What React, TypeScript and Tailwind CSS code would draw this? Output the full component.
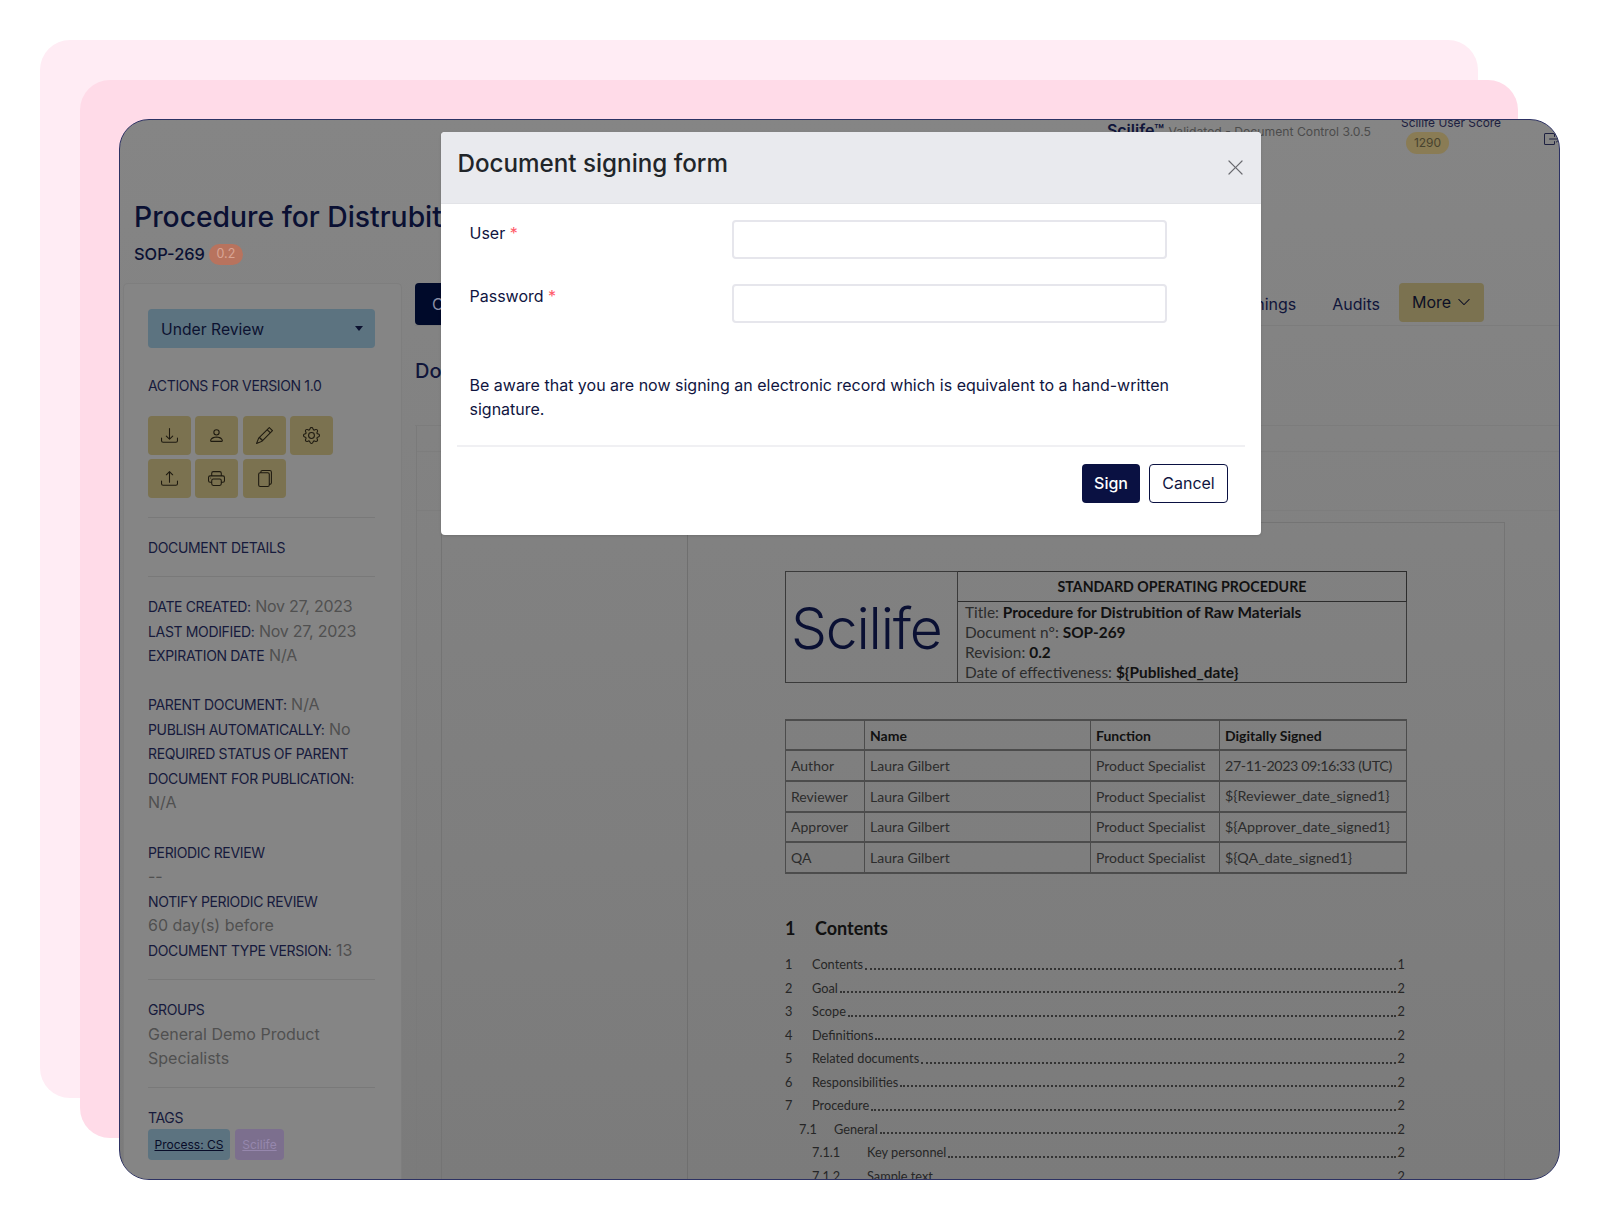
import React from "react";
import { BsDownload, BsPerson, BsPencil, BsGear, BsUpload, BsPrinter, BsFiles, BsChevronDown, BsXLg, BsBoxArrowRight } from "react-icons/bs";

const Label = ({ children }: { children: React.ReactNode }) => (
  <span className="text-[14px] tracking-[-0.35px] text-[#161a3c]">{children}</span>
);
const Val = ({ children }: { children: React.ReactNode }) => (
  <span className="text-[16px] text-[#505050]">{children}</span>
);
const DateVal = ({ children }: { children: React.ReactNode }) => (
  <span className="text-[16px] tracking-[-0.25px] text-[#505050]">{children}</span>
);
const Row = ({ children }: { children: React.ReactNode }) => <div className="h-[24.5px] whitespace-nowrap leading-[24.5px]">{children}</div>;
const Rule = ({ className }: { className: string }) => <div className={"border-t border-[#797979] " + className} />;

const icons = [BsDownload, BsPerson, BsPencil, BsGear, BsUpload, BsPrinter, BsFiles];

const toc: [string, string, string, string, string][] = [
  ["1", "Contents", "1", "w-[27px]", ""],
  ["2", "Goal", "2", "w-[27px]", ""],
  ["3", "Scope", "2", "w-[27px]", ""],
  ["4", "Definitions", "2", "w-[27px]", ""],
  ["5", "Related documents", "2", "w-[27px]", ""],
  ["6", "Responsibilities", "2", "w-[27px]", ""],
  ["7", "Procedure", "2", "w-[27px]", ""],
  ["7.1", "General", "2", "w-[35px]", "pl-[14px]"],
  ["7.1.1", "Key personnel", "2", "w-[55px]", "pl-[27px]"],
  ["7.1.2", "Sample text", "2", "w-[55px]", "pl-[27px]"],
];

const people = [
  ["Author", "27-11-2023 09:16:33 (UTC)", "tracking-[-0.4px]"],
  ["Reviewer", "${Reviewer_date_signed1}", ""],
  ["Approver", "${Approver_date_signed1}", ""],
  ["QA", "${QA_date_signed1}", ""],
];

const hb = "border-x border-y-2 border-[#4c4c4c] pl-[5px] whitespace-nowrap";

export default function App() {
  return (
    <div className="h-[1220px] w-[1600px] overflow-hidden bg-white pl-[40px] pt-[40px] font-[Inter,sans-serif]">
      <div className="h-[1058px] w-[1438px] rounded-[30px] bg-[#ffecf4] pl-[40px] pt-[40px]">
        <div className="h-[1058px] w-[1438px] rounded-[30px] bg-[#ffdbe8] pl-[39px] pt-[39px]">
          <div className="relative h-[1061px] w-[1441px] overflow-hidden rounded-[30px] border border-[#2d3263] bg-gradient-to-b from-[#858585] to-[#7b7b7b] text-[#161a3c]">
            {/* top bar */}
            <div className="flex h-[40px] items-start justify-end">
              <div className="whitespace-nowrap leading-[20px]">
                <span className="text-[16px] font-semibold text-[#10153a]">Scilife™</span>{" "}
                <span className="text-[12.2px] text-[#4c4c4c]">Validated - Document Control 3.0.5</span>
              </div>
              <div className="ml-[30px] mt-[-5px] w-[99px]">
                <div className="whitespace-nowrap text-[11.9px] leading-[16px] text-[#1d2040]">Scilife User Score</div>
                <div className="ml-[5px] mt-[1px] flex h-[22px] w-[43px] items-center justify-center rounded-full bg-[#8a7c55] text-[12px] text-[#48432f]">1290</div>
              </div>
              <BsBoxArrowRight className="ml-[44px] mr-[-1px] mt-[11px] shrink-0 text-[16px] text-[#1d2040]" />
            </div>

            {/* title */}
            <div className="ml-[14px] mt-[39px] whitespace-nowrap text-[28.3px] font-medium leading-[36px] text-[#0a1033]">
              Procedure for Distrubition of Raw Materials
            </div>
            <div className="ml-[14px] mt-[7px] flex h-[24px] items-center">
              <span className="text-[16.4px] font-medium text-[#0a1033]">SOP-269</span>
              <span className="ml-[4px] flex h-[21px] w-[34px] items-center justify-center rounded-full bg-[#b8735e] text-[12.5px] text-[#d9a595]">0.2</span>
            </div>

            {/* body */}
            <div className="ml-[3px] mt-[17px] flex gap-[13px]">
              <aside className="h-[900px] w-[279px] shrink-0 rounded-t-[5px] border border-b-0 border-[#7e7e7e] bg-[#858585] pl-[24px] pr-[26px] pt-[25px]">
                <div className="flex h-[39px] items-center justify-between rounded-[4px] bg-[#5c7380] pl-[13px] pr-[12px] text-[15.7px] text-[#0c1230]">
                  <span className="pt-[2px]">Under Review</span>
                  <span className="h-0 w-0 border-x-[4px] border-t-[5px] border-x-transparent border-t-[#0c1230]" />
                </div>
                <div className="mt-[25px] leading-[24px]"><Label>ACTIONS FOR VERSION 1.0</Label></div>
                <div className="mt-[18px] grid grid-cols-[repeat(4,43px)] gap-x-[4.4px] gap-y-[4px]">
                  {icons.map((I, i) => (
                    <div key={i} className="flex h-[39px] w-[43px] items-center justify-center rounded-[4px] bg-[#7b7250] text-[17px] text-[#1e1a10]">
                      <I />
                    </div>
                  ))}
                </div>
                <Rule className="mt-[19px]" />
                <div className="mt-[17px] leading-[24px]"><Label>DOCUMENT DETAILS</Label></div>
                <Rule className="mt-[16px]" />
                <div className="mt-[17px]">
                  <Row><Label>DATE CREATED:</Label> <DateVal>Nov 27, 2023</DateVal></Row>
                  <Row><Label>LAST MODIFIED:</Label> <DateVal>Nov 27, 2023</DateVal></Row>
                  <Row><Label>EXPIRATION DATE</Label> <Val>N/A</Val></Row>
                </div>
                <div className="mt-[24.5px]">
                  <Row><Label>PARENT DOCUMENT:</Label> <Val>N/A</Val></Row>
                  <Row><Label>PUBLISH AUTOMATICALLY:</Label> <Val>No</Val></Row>
                  <Row><Label>REQUIRED STATUS OF PARENT</Label></Row>
                  <Row><Label>DOCUMENT FOR PUBLICATION:</Label></Row>
                  <Row><Val>N/A</Val></Row>
                </div>
                <div className="mt-[25px]">
                  <Row><Label>PERIODIC REVIEW</Label></Row>
                  <Row><Val>--</Val></Row>
                  <Row><Label>NOTIFY PERIODIC REVIEW</Label></Row>
                  <Row><Val>60 day(s) before</Val></Row>
                  <Row><Label>DOCUMENT TYPE VERSION:</Label> <Val>13</Val></Row>
                </div>
                <Rule className="mt-[17px]" />
                <div className="mt-[17px]">
                  <Row><Label>GROUPS</Label></Row>
                  <Row><Val>General Demo Product</Val></Row>
                  <Row><Val>Specialists</Val></Row>
                </div>
                <Rule className="mt-[16px]" />
                <div className="mt-[17px]"><Row><Label>TAGS</Label></Row></div>
                <div className="flex gap-[5px]">
                  <span className="flex h-[31px] w-[82px] items-center justify-center rounded-[4px] bg-[#5c7380] text-[12px] text-[#080c28] underline">Process: CS</span>
                  <span className="flex h-[31px] w-[49px] items-center justify-center rounded-[4px] bg-[#7c6f8e] text-[12px] text-[#9687ad] underline">Scilife</span>
                </div>
              </aside>

              <main className="min-w-0 flex-1">
                <div className="flex h-[43px] items-start border-b border-[#7c7c7c]">
                  <div className="flex h-[42px] w-[100px] items-center rounded-l-[4px] bg-[#000a2a] pl-[17px] text-[16px] text-[#8a8fa5]">Content</div>
                  <div className="ml-auto flex h-[39px] items-center gap-[36px] pr-[75px] text-[16px] text-[#10153a]">
                    <span className="pt-[3px]">Trainings</span>
                    <span className="pt-[3px]">Audits</span>
                    <span className="ml-[-17px] flex h-[39px] w-[85px] items-center justify-center gap-[6px] rounded-[4px] bg-[#7b7250] pb-[1px] text-[#0c0f25]">
                      More <BsChevronDown className="text-[14px]" />
                    </span>
                  </div>
                </div>
                <div className="flex h-[100px] items-start border-b border-[#7c7c7c]">
                  <h2 className="mt-[31px] text-[20px] font-medium leading-[28px] text-[#10153a]">Document</h2>
                </div>
                <div className="ml-[1px] border-l border-[#7a7a7a]">
                  <div className="h-[26px] border-b border-[#7d7d7d]" />
                  <div className="h-[59px] border-b border-[#7d7d7d]" />
                  <div className="flex h-[700px] w-[1089px] pl-[24px] pt-[11px]">
                    <div className="flex h-[689px] w-[1064px] border border-[#747474]">
                      <div className="w-[246px] shrink-0 border-r border-[#6f6f6f]" />
                      <div className="ml-[97px] w-[622px] shrink-0 pt-[48px] font-[Lato,sans-serif] text-[#1c1c1c]">
                        <table className="w-[622px] table-fixed border-collapse border border-[#2c2c2c] text-[15.4px] leading-[20px] text-[#2c2c2c]">
                          <tbody>
                            <tr className="h-[30px]">
                              <td rowSpan={2} className="w-[172px] border border-[#3a3a3a] pl-[5px] pt-[3px] font-[Inter,sans-serif] text-[57px] font-light leading-[56px] tracking-[-1.2px] text-[#0a1033]">Scilife</td>
                              <td className="border border-[#2c2c2c] text-center text-[14.2px] font-bold text-[#111111]">STANDARD OPERATING PROCEDURE</td>
                            </tr>
                            <tr>
                              <td className="border border-[#3a3a3a] pl-[7px]">
                                <div>Title: <b className="text-[#111111]">Procedure for Distrubition of Raw Materials</b></div>
                                <div>Document n°: <b className="text-[#111111]">SOP-269</b></div>
                                <div>Revision: <b className="text-[#111111]">0.2</b></div>
                                <div>Date of effectiveness: <b className="text-[#111111]">{"${Published_date}"}</b></div>
                              </td>
                            </tr>
                          </tbody>
                        </table>

                        <table className="mt-[36px] w-[622px] table-fixed border-collapse text-[14px] text-[#2c2c2c]">
                          <colgroup>
                            <col className="w-[79px]" />
                            <col className="w-[226px]" />
                            <col className="w-[129px]" />
                            <col />
                          </colgroup>
                          <tbody>
                            <tr className="h-[30px] font-bold text-[#111111]">
                              <td className={hb} />
                              <td className={hb}>Name</td>
                              <td className={hb}>Function</td>
                              <td className={hb}>Digitally Signed</td>
                            </tr>
                            {people.map(([role, date, track]) => (
                              <tr key={role} className="h-[30.75px]">
                                <td className={hb}>{role}</td>
                                <td className={hb}>Laura Gilbert</td>
                                <td className={hb}>Product Specialist</td>
                                <td className={hb + " text-[14.3px] " + track}>{date}</td>
                              </tr>
                            ))}
                          </tbody>
                        </table>

                        <div className="mt-[42px] flex text-[18px] font-bold leading-[24px] text-[#111111]">
                          <span className="w-[30px]">1</span>Contents
                        </div>
                        <div className="mt-[13px] text-[12.75px] leading-[23.5px] text-[#262626]">
                          {toc.map(([n, t, p, w, pad]) => (
                            <div key={n} className={"flex h-[23.5px] pr-[2px] " + pad}>
                              <span className={"shrink-0 " + w}>{n}</span>
                              <span className="shrink-0">{t}</span>
                              <span className="mx-[2px] mb-[7px] min-w-0 flex-1 border-b-2 border-dotted border-[#333333]" />
                              <span className="shrink-0">{p}</span>
                            </div>
                          ))}
                        </div>
                      </div>
                    </div>
                  </div>
                </div>
              </main>
            </div>

            {/* modal */}
            <div className="absolute left-[321px] top-[12px] w-[820px] overflow-hidden rounded-[4px] bg-white shadow-sm">
              <div className="flex h-[72px] items-start justify-between border-b border-[#e2e3e7] bg-[#e9eaee] pl-[16.5px] pr-[16px]">
                <div className="mt-[16px] text-[24.2px] font-medium leading-[32px] text-[#212529]">Document signing form</div>
                <BsXLg className="mt-[26px] text-[19px] text-[#6a6b70]" />
              </div>
              <div className="px-[28.5px]">
                <div className="mt-[16px] flex">
                  <div className="w-[262.5px] pt-[1px] text-[16px] leading-[24px] text-[#10153f]">User <span className="text-[#ff5a6a]">*</span></div>
                  <input className="h-[39px] w-[435px] rounded-[4px] border-2 border-[#e6e6ec] bg-white" />
                </div>
                <div className="mt-[25px] flex">
                  <div className="w-[262.5px] text-[16px] leading-[24px] text-[#10153f]">Password <span className="text-[#ff5a6a]">*</span></div>
                  <input className="h-[39px] w-[435px] rounded-[4px] border-2 border-[#e6e6ec] bg-white" />
                </div>
                <p className="mt-[50px] w-[730px] text-[16px] leading-[24px] text-[#10153f]">
                  Be aware that you are now signing an electronic record which is equivalent to a hand-written signature.
                </p>
              </div>
              <div className="mx-[16px] mt-[24px] border-t-2 border-[#f0f0f3]" />
              <div className="flex justify-end gap-[9px] pb-[32px] pr-[33px] pt-[17px]">
                <button className="h-[39px] w-[58px] rounded-[4px] bg-[#0a1142] pb-px text-[16px] font-medium text-white">Sign</button>
                <button className="h-[39px] w-[79px] rounded-[4px] border border-[#0a1142] bg-white pb-px text-[16px] text-[#10153f]">Cancel</button>
              </div>
            </div>
          </div>
        </div>
      </div>
    </div>
  );
}
